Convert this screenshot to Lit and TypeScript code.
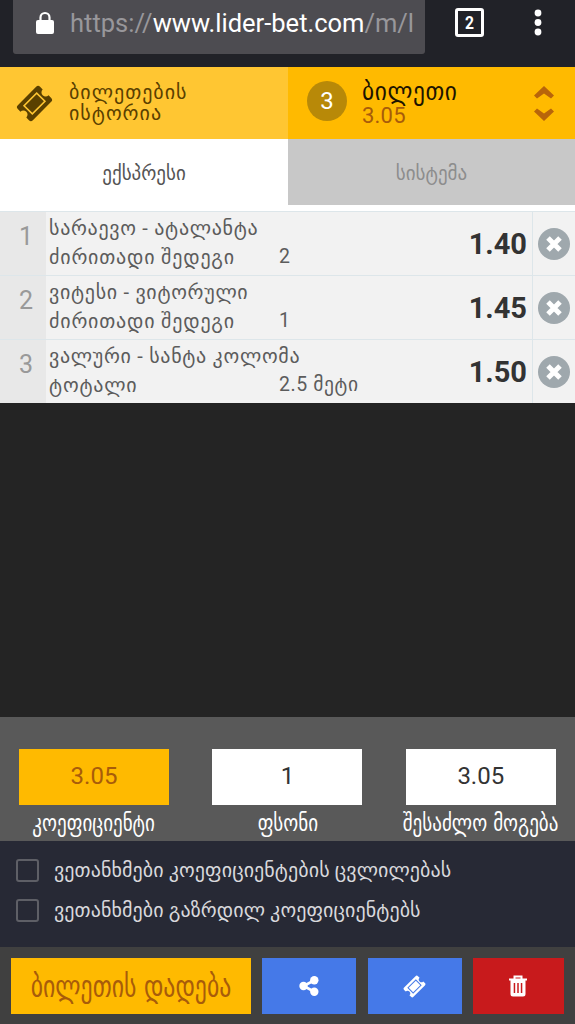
import { LitElement, html, css, svg } from "lit";
import { customElement, property, state } from "lit/decorators.js";

const ticketShape = svg`
  <g transform="rotate(-45 20 20)">
    <path fill="currentColor" fill-rule="evenodd" d="M6 8.500H34Q37 8.500 37 11.500V15.500A4.500 4.500 0 0 0 37 24.500V28.500Q37 31.500 34 31.500H6Q3 31.500 3 28.500V24.500A4.500 4.500 0 0 0 3 15.500V11.500Q3 8.500 6 8.500ZM9.500 12.800V27.200H30.500V12.800Z"/>
    <rect fill="currentColor" x="11.200" y="14.500" width="17.600" height="11"/>
  </g>`;

interface Bet {
  match: string;
  market: string;
  pick: string;
  odds: string;
}

@customElement("bet-row")
class BetRow extends LitElement {
  @property({ type: Number }) index = 1;
  @property({ attribute: false }) bet!: Bet;

  static styles = css`
    :host {
      display: grid;
      grid-template-columns: 46px 1fr 80px 43px;
      height: 64px;
      box-sizing: border-box;
      border-top: 1px solid #dde6ea;
      background: #f2f2f2;
      color: #5c5c5c;
    }
    .index {
      background: #e8e8e8;
      color: #999;
      font-size: 25px;
      line-height: 29px;
      padding: 10px 0 0 6px;
      text-align: center;
    }
    .info { padding-left: 3px; white-space: nowrap; font-size: 20px; }
    .match { height: 29px; line-height: 33px; letter-spacing: 0.7px; }
    .line { display: grid; grid-template-columns: 230px 1fr; height: 30px; line-height: 32px; letter-spacing: 0.8px; }
    .pick { font-size: 19.500px; letter-spacing: 0.6px; }
    .odds {
      align-self: center;
      text-align: right;
      padding: 1px 5px 0 0;
      font-weight: 700;
      font-size: 29px;
      color: #333;
    }
    .remove {
      border-left: 1px solid #dde6ea;
      display: flex;
      align-items: center;
      padding: 1px 0 0 5px;
    }
  `;

  render() {
    const b = this.bet;
    return html`
      <div class="index">${this.index}</div>
      <div class="info">
        <div class="match">${b.match}</div>
        <div class="line"><span>${b.market}</span><span class="pick">${b.pick}</span></div>
      </div>
      <div class="odds">${b.odds}</div>
      <div class="remove">
        <svg width="32" height="32" viewBox="0 0 32 32">
          <circle cx="16" cy="16" r="16" fill="#9fa8ad" />
          <path d="M10 10L22 22M22 10L10 22" stroke="#fff" stroke-width="5" />
        </svg>
      </div>
    `;
  }
}

@customElement("app-root")
class AppRoot extends LitElement {
  @state() private bets: Bet[] = [
    { match: "სარაევო - ატალანტა", market: "ძირითადი შედეგი", pick: "2", odds: "1.40" },
    { match: "ვიტესი - ვიტორული", market: "ძირითადი შედეგი", pick: "1", odds: "1.45" },
    { match: "ვალური - სანტა კოლომა", market: "ტოტალი", pick: "2.5 მეტი", odds: "1.50" },
  ];

  static styles = css`
    :host {
      display: flex;
      flex-direction: column;
      height: 1024px;
      overflow: hidden;
      background: #242424;
      font-family: Roboto, "DejaVu Sans", sans-serif;
    }
    svg { display: block; flex: none; }
    .browser { display: flex; height: 67px; background: #212228; color: #fff; }
    .url {
      margin-left: 13px;
      width: 412px;
      height: 54px;
      box-sizing: border-box;
      padding: 0 8px 8px 23px;
      border-radius: 0 0 3px 3px;
      background: #4d4c51;
      display: flex;
      align-items: center;
    }
    .address { margin-left: 16px; white-space: nowrap; font-size: 25.500px; line-height: 34px; color: #98979b; }
    .host { color: #fff; }
    .tabs { margin: 8px 0 0 30px; }
    .menu { margin: 9px 0 0 49px; }
    .top { display: grid; grid-template-columns: 288px 1fr; height: 72px; }
    .history { display: flex; align-items: center; background: #ffc632; color: #5a4000; padding-left: 16px; }
    .history-text { margin-left: 16px; font-size: 20px; line-height: 21px; letter-spacing: 1px; }
    .ticket { display: flex; align-items: center; background: #ffba00; padding: 0 19px; }
    .count {
      width: 40px;
      height: 40px;
      margin-top: -5px;
      border-radius: 50%;
      background: #b88908;
      color: #fff;
      font-size: 24px;
      line-height: 40px;
      text-align: center;
    }
    .ticket-text { flex: 1; margin-left: 15px; }
    .title, .caption, .place { font-family: "DejaVu Sans Condensed", "DejaVu Sans", sans-serif; font-stretch: condensed; }
    .title { font-size: 26px; line-height: 26px; color: #1d1400; letter-spacing: 0.6px; }
    .total { font-size: 22px; line-height: 24px; color: #a85c0a; letter-spacing: 0.2px; }
    .modes { display: grid; grid-template-columns: 288px 1fr; grid-template-rows: 66px; background: #fff; text-align: center; font-size: 19px; line-height: 70px; color: #555; padding-bottom: 6px; }
    .inactive { background: #c8c8c8; color: #8d8d8d; }
    .spacer { flex: 1; }
    .amounts { display: grid; grid-template-columns: repeat(3, 150px); column-gap: 43.400px; height: 124px; box-sizing: border-box; padding: 32px 19px 0; background: #595959; }
    .field { color: #fff; white-space: nowrap; }
    .value { height: 56px; line-height: 55px; background: #fff; color: #333; font-size: 24px; text-align: center; }
    .value.gold { background: #ffba00; color: #a85c0a; }
    .caption { display: flex; justify-content: center; font-size: 23px; line-height: 37px; }
    .options { height: 106px; box-sizing: border-box; padding: 9px 16px 0; background: #272935; color: #d8d8dc; font-size: 20px; letter-spacing: 0.090px; }
    .option { display: flex; align-items: center; height: 40px; gap: 15px; white-space: nowrap; }
    .box { width: 23px; height: 23px; box-sizing: border-box; border: 2px solid #5e5f66; border-radius: 3px; flex: none; }
    .actions { display: grid; grid-template-columns: 240px 94px 94px 91px; gap: 11.300px; height: 77px; box-sizing: border-box; padding: 11px 11px 10px; background: #404040; color: #fff; }
    .button { display: flex; align-items: center; justify-content: center; background: #4579e8; }
    .place { background: #ffba00; color: #a85c0a; font-size: 30px; white-space: nowrap; }
    .delete { background: #c81a1c; }
    .narrow { display: inline-block; transform: scaleX(0.92); }
    .place .narrow { transform: scaleX(0.88); }
  `;

  render() {
    return html`
      <div class="browser">
        <div class="url">
          <svg width="18" height="24" viewBox="0 0 18 24">
            <rect y="9" width="18" height="14" rx="2" fill="#fff" />
            <path d="M4.500 10V6.500a4.500 4.500 0 0 1 9 0V10" fill="none" stroke="#fff" stroke-width="2.200" />
          </svg>
          <div class="address">https://<span class="host">www.lider-bet.com</span>/m/l</div>
        </div>
        <svg class="tabs" width="29" height="29" viewBox="0 0 29 29">
          <rect x="1.500" y="1.500" width="26" height="26" rx="1.500" fill="none" stroke="#fff" stroke-width="3" />
          <text x="14.500" y="21" text-anchor="middle" font-size="19" font-weight="700" fill="#fff" textLength="9" lengthAdjust="spacingAndGlyphs">2</text>
        </svg>
        <svg class="menu" width="10" height="28" viewBox="0 0 10 28" fill="#fff">
          <circle cx="5" cy="4" r="3.400" /><circle cx="5" cy="13.500" r="3.400" /><circle cx="5" cy="23" r="3.400" />
        </svg>
      </div>
      <div class="top">
        <div class="history">
          <svg width="37" height="37" viewBox="0 0 40 40">${ticketShape}</svg>
          <div class="history-text">ბილეთების<br />ისტორია</div>
        </div>
        <div class="ticket">
          <div class="count">3</div>
          <div class="ticket-text">
            <div class="title">ბილეთი</div>
            <div class="total">3.05</div>
          </div>
          <svg width="24" height="38" viewBox="0 0 24 38" fill="#b8650a">
            <path d="M12 2L22 11.500L19 14.500L12 9.500L5 14.500L2 11.500ZM12 37L22 27.500L19 24.500L12 29.500L5 24.500L2 27.500Z" />
          </svg>
        </div>
      </div>
      <div class="modes">
        <div>ექსპრესი</div>
        <div class="inactive">სისტემა</div>
      </div>
      ${this.bets.map((bet, i) => html`<bet-row .index=${i + 1} .bet=${bet}></bet-row>`)}
      <div class="spacer"></div>
      <div class="amounts">
        <div class="field"><div class="value gold">3.05</div><div class="caption"><span class="narrow">კოეფიციენტი</span></div></div>
        <div class="field"><div class="value">1</div><div class="caption"><span class="narrow">ფსონი</span></div></div>
        <div class="field"><div class="value">3.05</div><div class="caption"><span class="narrow">შესაძლო მოგება</span></div></div>
      </div>
      <div class="options">
        <div class="option"><div class="box"></div><span>ვეთანხმები კოეფიციენტების ცვლილებას</span></div>
        <div class="option"><div class="box"></div><span>ვეთანხმები გაზრდილ კოეფიციენტებს</span></div>
      </div>
      <div class="actions">
        <div class="button place"><span class="narrow">ბილეთის დადება</span></div>
        <div class="button">
          <svg width="20" height="20" viewBox="0 0 20 20" fill="#fff">
            <path d="M15 4.500L4.500 10L15 15.500" fill="none" stroke="#fff" stroke-width="2.600" />
            <circle cx="4.500" cy="10" r="4.200" /><circle cx="15.300" cy="4.300" r="4.200" /><circle cx="15.300" cy="15.700" r="4.200" />
          </svg>
        </div>
        <div class="button"><svg width="23" height="23" viewBox="0 0 40 40">${ticketShape}</svg></div>
        <div class="button delete">
          <svg width="20" height="22" viewBox="0 0 20 22" fill="none" stroke="#fff">
            <path d="M1 4.500H19M6.500 4V1.500H13.500V4" stroke-width="2" />
            <path fill="#fff" stroke="none" fill-rule="evenodd" d="M2.500 4.500H17.500V19Q17.500 21.500 15 21.500H5Q2.500 21.500 2.500 19ZM5.700 8V18H7.200V8ZM9.250 8V18H10.750V8ZM12.800 8V18H14.300V8Z" />
          </svg>
        </div>
      </div>
    `;
  }
}
